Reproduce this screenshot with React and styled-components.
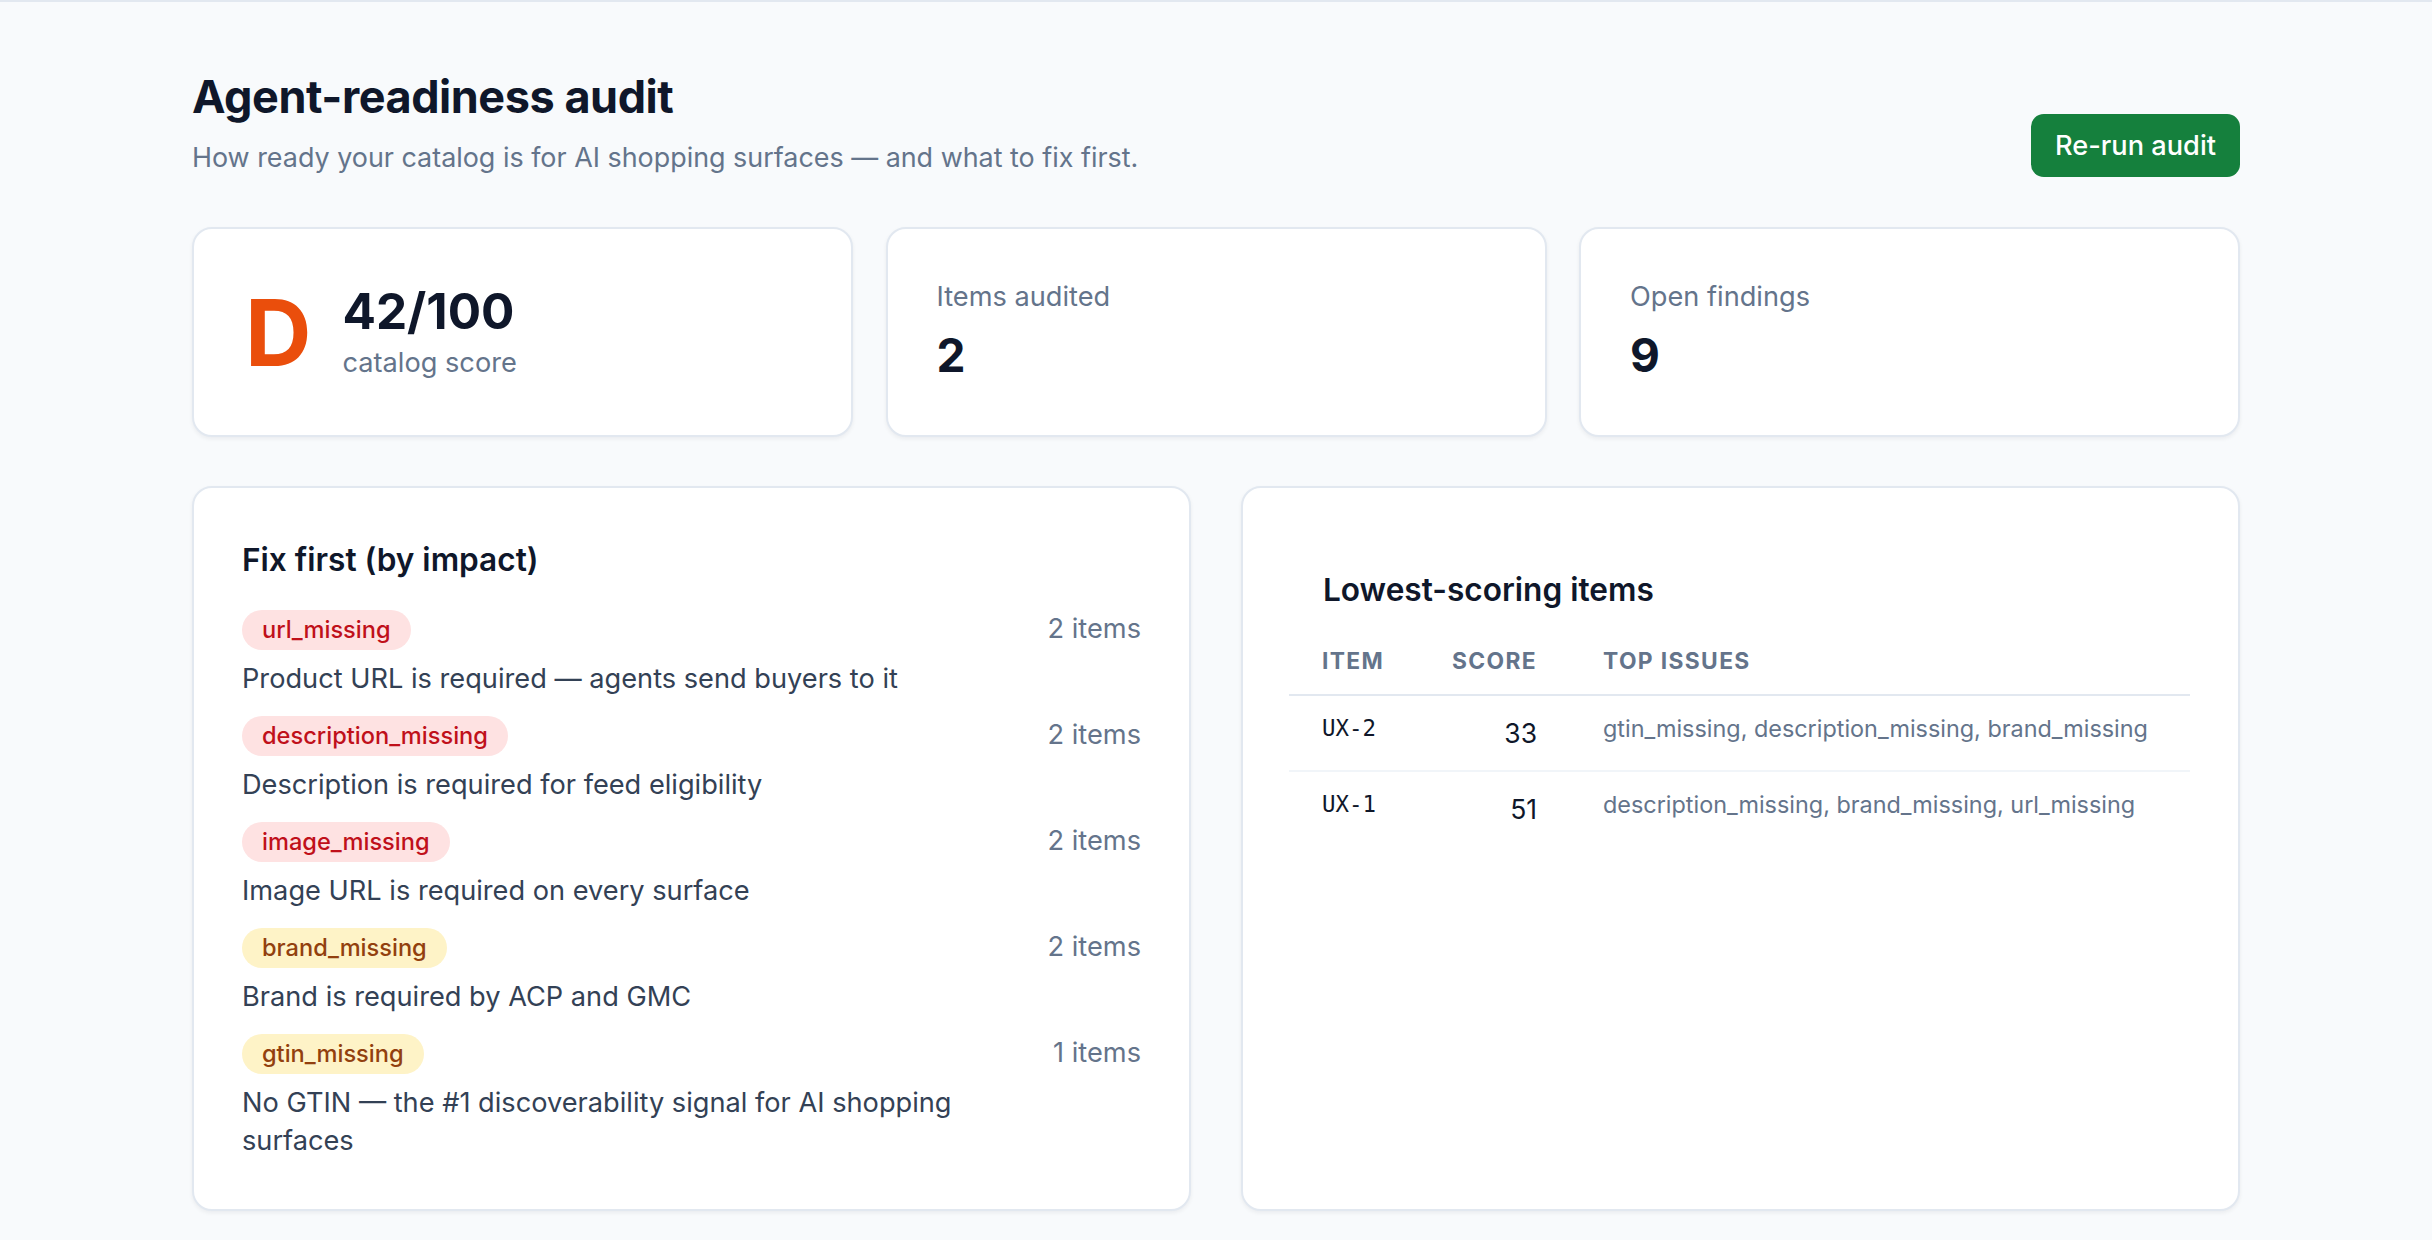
import React from "react";
import styled, { createGlobalStyle } from "styled-components";

const Global = createGlobalStyle`
  html, body { margin: 0; padding: 0; background: #f8fafc; }
  body { font-family: Inter, "Noto Sans", sans-serif; color: #0f172a; }
  * { box-sizing: border-box; }
`;

const TopRule = styled.div`
  height: 2px;
  background: #e2e8f0;
`;

const Page = styled.main`
  max-width: 2048px;
  margin: 0 auto;
  padding: 68px 0 40px;
`;

const Header = styled.header`
  display: flex;
  justify-content: space-between;
  align-items: flex-end;
`;

const Title = styled.h1`
  margin: 0;
  font-size: 45px;
  line-height: 1.2;
  font-weight: 700;
  letter-spacing: -0.01em;
  color: #0f172a;
`;

const Subtitle = styled.p`
  margin: 13px 0 0;
  font-size: 26.9px;
  line-height: 1.5;
  color: #64748b;
`;

const Button = styled.button`
  height: 63px;
  padding: 0 24px;
  border: none;
  border-radius: 12.8px;
  background: #15803d;
  color: #fff;
  font-family: inherit;
  font-size: 27.2px;
  font-weight: 500;
  cursor: pointer;
`;

const StatGrid = styled.section`
  display: grid;
  grid-template-columns: repeat(3, 1fr);
  gap: 32.5px;
  margin-top: 50px;
`;

const Card = styled.div`
  background: #fff;
  border: 2px solid #e2e8f0;
  border-radius: 20px;
  box-shadow: 0 2px 4px rgba(15, 23, 42, 0.06);
  padding: ${(p) => p.$pad || "48px 49px 52px"};
`;

const GradeRow = styled.div`
  display: flex;
  align-items: center;
  gap: 31px;
  height: 100%;
`;

const Grade = styled.div`
  font-size: 92px;
  line-height: 1.1;
  font-weight: 700;
  color: #ea4e0c;
`;

const ScoreBlock = styled.div`
  display: flex;
  flex-direction: column;
`;

const ScoreValue = styled.div`
  font-size: 49.5px;
  line-height: 1.25;
  font-weight: 700;
  color: #0f172a;
`;

const Muted = styled.div`
  font-size: 27.2px;
  line-height: 1.5;
  color: #64748b;
`;

const StatValue = styled.div`
  margin-top: 10px;
  font-size: 46px;
  line-height: 1.2;
  font-weight: 700;
  color: #0f172a;
`;

const PanelGrid = styled.section`
  display: grid;
  grid-template-columns: 1fr 1fr;
  gap: 50px;
  margin-top: 48.5px;
  align-items: stretch;
`;

const Panel = styled(Card)`
  padding: 50px 48px 49px;
`;

const TablePanel = styled(Card)`
  padding: 48px 48px 46px 46px;
`;

const PanelTitle = styled.h2`
  margin: 0;
  font-size: 31.6px;
  line-height: 1.4;
  font-weight: 600;
  color: #0f172a;
  padding: ${(p) => (p.$inset ? "32px 0 0 34px" : "0")};
  margin-bottom: ${(p) => (p.$inset ? "16px" : "28px")};
`;

const FindingList = styled.div`
  display: flex;
  flex-direction: column;
  gap: 18px;
`;

const Finding = styled.div`
  display: flex;
  justify-content: space-between;
  align-items: flex-start;
  gap: 32px;
`;

const FindingMain = styled.div`
  flex: 1;
  min-width: 0;
  display: flex;
  flex-direction: column;
  align-items: flex-start;
  gap: 9.6px;
`;

const Pill = styled.span`
  display: inline-block;
  height: 40px;
  padding: 3.2px 20px;
  border-radius: 999px;
  font-size: 23.6px;
  line-height: 33.6px;
  font-weight: 500;
  background: ${(p) => (p.$tone === "amber" ? "#fef3c7" : "#fee2e2")};
  color: ${(p) => (p.$tone === "amber" ? "#92400e" : "#c0101a")};
`;

const Desc = styled.div`
  font-size: 27.2px;
  line-height: 38.4px;
  color: #334155;
`;

const Count = styled.div`
  flex-shrink: 0;
  font-size: 27.2px;
  line-height: 38.4px;
  color: #64748b;
`;

const Table = styled.table`
  width: 100%;
  border-collapse: collapse;
`;

const Th = styled.th`
  padding: 16px 33px;
  text-align: ${(p) => p.$align || "left"};
  width: ${(p) => p.$width || "auto"};
  font-size: 22.8px;
  line-height: 33.6px;
  font-weight: 700;
  letter-spacing: 0.06em;
  text-transform: uppercase;
  color: #64748b;
  border-bottom: 2px solid #e2e8f0;
`;

const Tr = styled.tr`
  & + & td { border-top: 2px solid #f1f5f9; }
`;

const Td = styled.td`
  padding: 16px 33px;
  vertical-align: top;
  text-align: ${(p) => p.$align || "left"};
`;

const ItemCode = styled(Td)`
  font-family: "DejaVu Sans Mono", "Liberation Mono", monospace;
  font-size: 22.4px;
  line-height: 33.6px;
  color: #0f172a;
`;

const ScoreCell = styled(Td)`
  font-size: 26.5px;
  line-height: 42px;
  color: #0f172a;
`;

const IssuesCell = styled(Td)`
  font-size: 23.4px;
  line-height: 33.6px;
  color: #64748b;
`;

const findings = [
  { code: "url_missing", tone: "red", count: 2, desc: "Product URL is required — agents send buyers to it" },
  { code: "description_missing", tone: "red", count: 2, desc: "Description is required for feed eligibility" },
  { code: "image_missing", tone: "red", count: 2, desc: "Image URL is required on every surface" },
  { code: "brand_missing", tone: "amber", count: 2, desc: "Brand is required by ACP and GMC" },
  { code: "gtin_missing", tone: "amber", count: 1, desc: "No GTIN — the #1 discoverability signal for AI shopping surfaces" },
];

const items = [
  { id: "UX-2", score: 33, issues: "gtin_missing, description_missing, brand_missing" },
  { id: "UX-1", score: 51, issues: "description_missing, brand_missing, url_missing" },
];

export default function App() {
  return (
    <>
      <Global />
      <TopRule />
      <Page>
        <Header>
          <div>
            <Title>Agent-readiness audit</Title>
            <Subtitle>How ready your catalog is for AI shopping surfaces — and what to fix first.</Subtitle>
          </div>
          <Button>Re-run audit</Button>
        </Header>

        <StatGrid>
          <Card $pad="49px 51px">
            <GradeRow>
              <Grade>D</Grade>
              <ScoreBlock>
                <ScoreValue>42/100</ScoreValue>
                <Muted>catalog score</Muted>
              </ScoreBlock>
            </GradeRow>
          </Card>
          <Card>
            <Muted>Items audited</Muted>
            <StatValue>2</StatValue>
          </Card>
          <Card>
            <Muted>Open findings</Muted>
            <StatValue>9</StatValue>
          </Card>
        </StatGrid>

        <PanelGrid>
          <Panel>
            <PanelTitle>Fix first (by impact)</PanelTitle>
            <FindingList>
              {findings.map((f) => (
                <Finding key={f.code}>
                  <FindingMain>
                    <Pill $tone={f.tone}>{f.code}</Pill>
                    <Desc>{f.desc}</Desc>
                  </FindingMain>
                  <Count>{f.count} items</Count>
                </Finding>
              ))}
            </FindingList>
          </Panel>
          <TablePanel>
            <PanelTitle $inset>Lowest-scoring items</PanelTitle>
            <Table>
              <thead>
                <tr>
                  <Th $width="130px">Item</Th>
                  <Th $width="148px" $align="right">Score</Th>
                  <Th>Top issues</Th>
                </tr>
              </thead>
              <tbody>
                {items.map((it) => (
                  <Tr key={it.id}>
                    <ItemCode>{it.id}</ItemCode>
                    <ScoreCell $align="right">{it.score}</ScoreCell>
                    <IssuesCell>{it.issues}</IssuesCell>
                  </Tr>
                ))}
              </tbody>
            </Table>
          </TablePanel>
        </PanelGrid>
      </Page>
    </>
  );
}
